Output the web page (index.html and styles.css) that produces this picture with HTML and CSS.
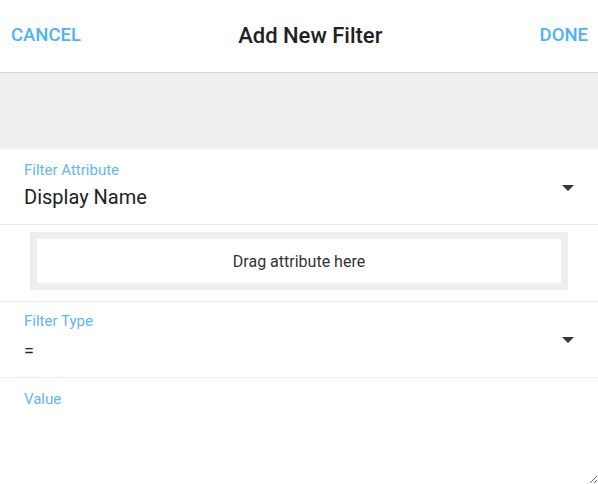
FILE: index.html
```html
<!DOCTYPE html>
<html lang="en">
<head>
    <meta charset="UTF-8">
    <meta name="viewport" content="width=device-width, initial-scale=1.0">
    <title>Add New Filter</title>
    <link rel="stylesheet" href="styles.css">
</head>
<body>

<header class="top-bar">
    <button class="link-button">CANCEL</button>
    <h1>Add New Filter</h1>
    <button class="link-button">DONE</button>
</header>

<div class="spacer"></div>

<form class="filter-form">
    <div class="field select-field first">
        <div class="field-body">
            <label class="field-label">Filter Attribute</label>
            <div class="field-value large">Display Name</div>
        </div>
        <span class="caret"></span>
    </div>

    <div class="drop-row">
        <div class="drop-zone">Drag attribute here</div>
    </div>

    <div class="field select-field">
        <div class="field-body">
            <label class="field-label">Filter Type</label>
            <div class="field-value">=</div>
        </div>
        <span class="caret"></span>
    </div>

    <div class="field value-field">
        <label class="field-label" for="value-input">Value</label>
        <textarea id="value-input"></textarea>
    </div>
</form>

</body>
</html>
```

FILE: styles.css
```css
body {
    font-family: Roboto, "Liberation Sans", sans-serif;
    background-color: #fff;
    color: #212121;
    margin: 0;
    padding: 0;
    height: 100vh;
    display: flex;
    flex-direction: column;
    overflow: hidden;
}
.top-bar {
    height: 73px;
    box-sizing: border-box;
    display: flex;
    align-items: center;
    justify-content: space-between;
    padding: 0 10px 2px 11px;
    border-bottom: 1px solid #d6d6d6;
    flex-shrink: 0;
}
.top-bar h1 {
    margin: 0;
    font-size: 22px;
    font-weight: 500;
    color: #212121;
}
.link-button {
    background: none;
    border: none;
    padding: 0;
    font-family: inherit;
    font-size: 18.5px;
    font-weight: 500;
    color: #50b2f5;
    cursor: pointer;
}
.spacer {
    height: 76px;
    background-color: #eeeeee;
    flex-shrink: 0;
}
.filter-form {
    flex: 1;
    display: flex;
    flex-direction: column;
}
.field {
    border-bottom: 1px solid #ebebeb;
    padding: 0 24px;
}
.select-field {
    height: 76px;
    box-sizing: border-box;
    display: flex;
    align-items: flex-start;
    padding-top: 10px;
    flex-shrink: 0;
}
.select-field.first {
    padding-top: 12px;
}
.field-body {
    flex: 1;
}
.field-label {
    display: block;
    font-size: 15px;
    color: #64b5f6;
}
.field-value {
    margin-top: 10px;
    font-size: 18px;
    color: #212121;
}
.field-value.large {
    margin-top: 6px;
    font-size: 20px;
}
.caret {
    align-self: center;
    width: 0;
    height: 0;
    border-left: 6px solid transparent;
    border-right: 6px solid transparent;
    border-top: 6px solid #333;
    margin-top: -10px;
}
.drop-row {
    height: 77px;
    box-sizing: border-box;
    display: flex;
    align-items: flex-start;
    padding: 7px 30px 0;
    border-bottom: 1px solid #ebebeb;
    flex-shrink: 0;
}
.drop-zone {
    flex: 1;
    height: 44px;
    border: 7px solid #eeeeee;
    display: flex;
    align-items: center;
    justify-content: center;
    font-size: 16px;
    color: #333;
}
.value-field {
    flex: 1;
    display: flex;
    flex-direction: column;
    border-bottom: none;
    padding: 12px 0 0 24px;
}
.value-field textarea {
    flex: 1;
    border: none;
    outline: none;
    resize: both;
    font-family: inherit;
    font-size: 16px;
    padding: 0;
    margin: 0;
}
```
